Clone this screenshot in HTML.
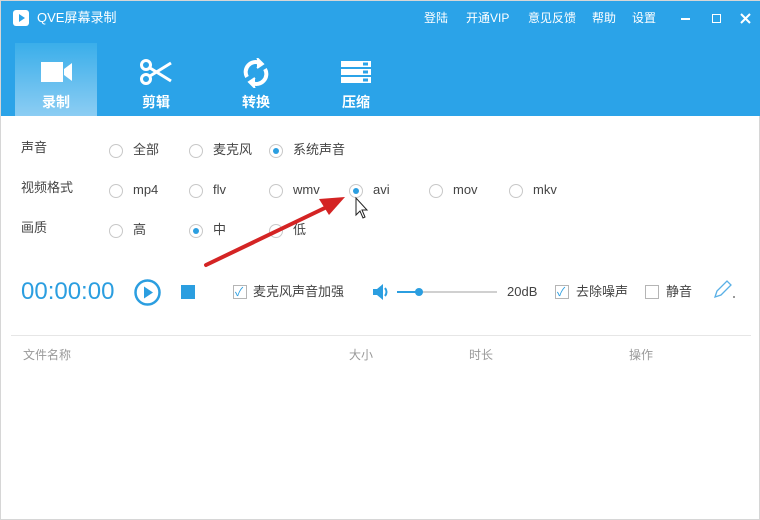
<!DOCTYPE html>
<html><head><meta charset="utf-8"><style>
*{margin:0;padding:0;box-sizing:border-box}
body{width:760px;height:520px;background:#fff;font-family:"Liberation Sans","Noto Sans CJK SC",sans-serif;font-size:12px;color:#333;position:relative;overflow:hidden;border:1px solid #d6d6d6}
.a{position:absolute;white-space:nowrap;line-height:16px}
.top{position:absolute;left:0;top:0;width:760px;height:115px;background:#2ba3e8}
.w{color:#fff}
.tab{position:absolute;top:42px;width:82px;height:73px;color:#fff;font-size:14px;font-weight:bold;text-align:center}
.tab span{position:absolute;left:0;right:0;top:51px;line-height:16px}
.r{position:absolute;width:14px;height:14px;border:1px solid #c8c8c8;border-radius:50%;background:#fff}
.r.on::after{content:"";position:absolute;left:3px;top:3px;width:6px;height:6px;border-radius:50%;background:#2b9ee0}
.cb{position:absolute;width:14px;height:14px;border:1px solid #b5b5b5;background:#fff}
.lbl{color:#444;font-size:13px}
.g{color:#999;font-size:12px}
</style></head><body>
<div class="top"></div>
<svg class="a" style="left:11px;top:8px" width="18" height="18"><rect x="1" y="1" width="16" height="16" rx="3" fill="#fff"/><path d="M7 5L13 9L7 13Z" fill="#2ba3e8"/></svg>
<div class="a w" style="left:36px;top:9px;font-size:13px">QVE屏幕录制</div>
<div class="a w" style="left:423px;top:9px;font-size:12px">登陆</div>
<div class="a w" style="left:465px;top:9px;font-size:12px">开通VIP</div>
<div class="a w" style="left:527px;top:9px;font-size:12px">意见反馈</div>
<div class="a w" style="left:591px;top:9px;font-size:12px">帮助</div>
<div class="a w" style="left:631px;top:9px;font-size:12px">设置</div>
<div class="a" style="left:680px;top:17px;width:9px;height:2px;background:#fff"></div>
<div class="a" style="left:711px;top:13px;width:9px;height:9px;border:1.5px solid #fff"></div>
<svg class="a" style="left:739px;top:12px" width="11" height="11"><path d="M1 1L10 10M10 1L1 10" stroke="#fff" stroke-width="2"/></svg>
<div class="tab" style="left:14px;background:linear-gradient(#3aaeea,#8ccdf3)">
<svg style="position:absolute;left:26px;top:18px" width="32" height="22"><rect x="0" y="1" width="22" height="20" fill="#fff"/><path d="M23 8L31 2V20L23 14Z" fill="#fff"/></svg><span>录制</span></div>
<div class="tab" style="left:114px">
<svg style="position:absolute;left:24px;top:16px" width="34" height="26" fill="none" stroke="#fff" stroke-width="3"><circle cx="7" cy="6" r="4.5"/><circle cx="7" cy="20" r="4.5"/><path d="M11 9L32 22M11 17L32 4"/></svg><span>剪辑</span></div>
<div class="tab" style="left:214px">
<svg style="position:absolute;left:27px;top:15px" width="28" height="30" fill="none" stroke="#fff" stroke-width="4"><path d="M5 19A10 10 0 0 1 18 5"/><path d="M23 11A10 10 0 0 1 10 25"/><path d="M15 0L21 6L15 10" fill="#fff" stroke-width="2"/><path d="M13 30L7 24L13 20" fill="#fff" stroke-width="2"/></svg><span>转换</span></div>
<div class="tab" style="left:314px">
<svg style="position:absolute;left:26px;top:18px" width="30" height="22"><rect width="30" height="6" fill="#fff"/><rect y="8" width="30" height="6" fill="#fff"/><rect y="16" width="30" height="6" fill="#fff"/><rect x="22" y="1.5" width="5" height="3" fill="#2ba3e8"/><rect x="22" y="9.5" width="5" height="3" fill="#2ba3e8"/><rect x="22" y="17.5" width="5" height="3" fill="#2ba3e8"/></svg><span>压缩</span></div>

<div class="a lbl" style="left:20px;top:139px">声音</div>
<div class="a lbl" style="left:20px;top:179px">视频格式</div>
<div class="a lbl" style="left:20px;top:219px">画质</div>

<div class="r" style="left:108px;top:143px"></div><div class="a lbl" style="left:132px;top:141px">全部</div>
<div class="r" style="left:188px;top:143px"></div><div class="a lbl" style="left:212px;top:141px">麦克风</div>
<div class="r on" style="left:268px;top:143px"></div><div class="a lbl" style="left:292px;top:141px">系统声音</div>

<div class="r" style="left:108px;top:183px"></div><div class="a lbl" style="left:132px;top:181px">mp4</div>
<div class="r" style="left:188px;top:183px"></div><div class="a lbl" style="left:212px;top:181px">flv</div>
<div class="r" style="left:268px;top:183px"></div><div class="a lbl" style="left:292px;top:181px">wmv</div>
<div class="r on" style="left:348px;top:183px"></div><div class="a lbl" style="left:372px;top:181px">avi</div>
<div class="r" style="left:428px;top:183px"></div><div class="a lbl" style="left:452px;top:181px">mov</div>
<div class="r" style="left:508px;top:183px"></div><div class="a lbl" style="left:532px;top:181px">mkv</div>

<div class="r" style="left:108px;top:223px"></div><div class="a lbl" style="left:132px;top:221px">高</div>
<div class="r on" style="left:188px;top:223px"></div><div class="a lbl" style="left:212px;top:221px">中</div>
<div class="r" style="left:268px;top:223px"></div><div class="a lbl" style="left:292px;top:221px">低</div>

<svg class="a" style="left:0;top:0" width="760" height="300"><path d="M205 264L330 204" stroke="#d42424" stroke-width="4" stroke-linecap="round"/><path d="M344 196L318 198L328 214Z" fill="#d42424"/>
<path d="M355 197V214L359 210L362 217L364 216L361 209L366 209Z" fill="#fff" stroke="#222" stroke-width="1"/></svg>

<div class="a" style="left:20px;top:277px;font-size:24px;line-height:28px;color:#2b9ee0">00:00:00</div>
<svg class="a" style="left:133px;top:278px" width="27" height="27"><circle cx="13.5" cy="13.5" r="12" fill="none" stroke="#2b9ee0" stroke-width="2.5"/><path d="M10 7.5L19 13.5L10 19.5Z" fill="#2b9ee0"/></svg>
<div class="a" style="left:180px;top:284px;width:14px;height:14px;background:#2b9ee0"></div>
<div class="cb" style="left:232px;top:284px"></div><div class="a" style="left:234px;top:283px;color:#2b9ee0;font-size:12px">✓</div>
<div class="a lbl" style="left:252px;top:283px">麦克风声音加强</div>
<svg class="a" style="left:372px;top:282px" width="16" height="18"><path d="M0 6H4L10 1V17L4 12H0Z" fill="#2b9ee0"/><path d="M12 5Q15 9 12 13" stroke="#2b9ee0" stroke-width="2" fill="none"/></svg>
<div class="a" style="left:396px;top:290px;width:100px;height:2px;background:#d0d0d0"></div>
<div class="a" style="left:396px;top:290px;width:22px;height:2px;background:#2b9ee0"></div>
<div class="a" style="left:414px;top:287px;width:8px;height:8px;border-radius:50%;background:#2b9ee0"></div>
<div class="a lbl" style="left:506px;top:283px">20dB</div>
<div class="cb" style="left:554px;top:284px"></div><div class="a" style="left:556px;top:283px;color:#2b9ee0;font-size:12px">✓</div>
<div class="a lbl" style="left:575px;top:283px">去除噪声</div>
<div class="cb" style="left:644px;top:284px"></div>
<div class="a lbl" style="left:665px;top:283px">静音</div>
<svg class="a" style="left:711px;top:279px" width="24" height="20"><path d="M3 17L5 11L15 1L19 5L9 15Z" fill="#fff" stroke="#5ab0e6" stroke-width="1.3"/><path d="M21 16L23 16L23 18L21 18Z" fill="#999"/></svg>

<div class="a" style="left:10px;top:334px;width:740px;height:1px;background:#e6e6e6"></div>
<div class="a g" style="left:22px;top:346px">文件名称</div>
<div class="a g" style="left:348px;top:346px">大小</div>
<div class="a g" style="left:468px;top:346px">时长</div>
<div class="a g" style="left:628px;top:346px">操作</div>
</body></html>
